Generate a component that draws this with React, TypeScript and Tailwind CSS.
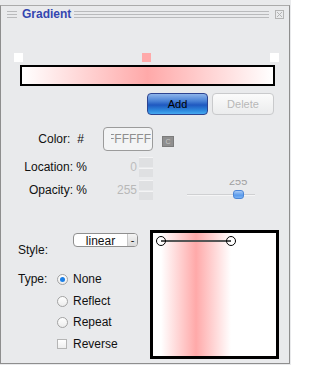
import React from "react";

function Lines({ className }: { className?: string }) {
  return (
    <div className={"flex flex-col gap-[2px] " + (className ?? "")}>
      <div className="h-px bg-[#b9babc]" />
      <div className="h-px bg-[#b9babc]" />
      <div className="h-px bg-[#b9babc]" />
    </div>
  );
}

function Spinner() {
  return (
    <div className="flex flex-col w-[14px] h-[20px] gap-px">
      <div className="flex-1 bg-[#dfe0e2] border-t border-[#f4f4f5]" />
      <div className="flex-1 bg-[#dfe0e2] border-t border-[#f4f4f5]" />
    </div>
  );
}

function Radio({ checked }: { checked?: boolean }) {
  return (
    <div className="w-[11px] h-[11px] rounded-full border border-[#a3a3a3] bg-[linear-gradient(to_bottom,#ffffff,#ececec)] flex items-center justify-center">
      {checked && <div className="w-[5px] h-[5px] rounded-full bg-[#1c7fe6]" />}
    </div>
  );
}

export default function App() {
  return (
    <div
      className="w-[291px] h-[365px] bg-[#e9eaec] overflow-hidden text-[#111]"
      style={{ fontFamily: '"Liberation Sans", Arial, sans-serif' }}
    >
      <div className="mt-[5px] w-[290px] h-[359px] border border-[#8e8e8e] border-t-[#ababab] bg-[#e9eaec] flex flex-col">
        {/* title bar */}
        <div className="h-[17px] flex items-center pr-[5px]">
          <Lines className="ml-[6px] w-[10px]" />
          <div className="ml-[5px] text-[12px] font-bold text-[#3446b0] leading-[17px]">Gradient</div>
          <Lines className="ml-[3px] flex-1" />
          <div className="ml-[6px] w-[9px] h-[9px] border border-[#b4b4b4] flex items-center justify-center">
            <svg width="7" height="7" viewBox="0 0 7 7">
              <path d="M1 1L6 6M6 1L1 6" stroke="#b4b4b4" strokeWidth="1" />
            </svg>
          </div>
        </div>

        {/* stops */}
        <div className="mt-[30px] ml-[13px] w-[265px] h-[9px] flex justify-between">
          <div className="w-[9px] h-[9px] bg-white" />
          <div className="w-[9px] h-[9px] bg-[#ffaaaa]" />
          <div className="w-[9px] h-[9px] bg-white" />
        </div>

        {/* bar */}
        <div className="mt-[3px] ml-[19px] w-[255px] h-[21px] border-2 border-black bg-[linear-gradient(to_right,#ffffff,#ffa9a9_50%,#ffffff)]" />

        {/* buttons */}
        <div className="mt-[7px] ml-[146px] flex gap-[4px]">
          <div className="w-[61px] h-[22px] rounded-[4px] border border-[#2c4390] bg-[linear-gradient(to_bottom,#8db4ea_0%,#4a82d6_35%,#1f58c0_55%,#2f8de0_85%,#47aaf0_100%)] flex items-center justify-center text-[11px] text-black">
            Add
          </div>
          <div className="w-[62px] h-[22px] rounded-[4px] border border-[#c9cacc] bg-[linear-gradient(to_bottom,#fbfbfb,#ebeced)] flex items-center justify-center text-[11px] text-[#b8b8b8]">
            Delete
          </div>
        </div>

        {/* color */}
        <div className="mt-[12px] h-[24px] flex items-center text-[12px]">
          <div className="w-[83px] flex justify-end gap-[7px]">
            <span>Color:</span>
            <span>#</span>
          </div>
          <div className="ml-[19px] w-[50px] h-[24px] rounded-[4px] border border-[#9b9b9b] bg-[#f3f4f5] flex items-center justify-end pr-[1px]">
            <div className="w-[40px] overflow-hidden flex justify-end whitespace-nowrap text-[12px] text-[#8e8e8e]">
              FFFFFF
            </div>
          </div>
          <div className="ml-[9px] mt-[5px] w-[12px] h-[11px] bg-[#8f8f8f] border border-[#7b7b7b] flex items-center justify-center text-[7px] leading-none text-[#c8c8c8]">
            C
          </div>
        </div>

        {/* location */}
        <div className="mt-[6px] h-[20px] flex items-center text-[12px]">
          <div className="w-[86px] text-right">Location: %</div>
          <div className="w-[50px] text-right text-[#bdbdbd]">0</div>
          <div className="ml-[2px]">
            <Spinner />
          </div>
        </div>

        {/* opacity */}
        <div className="mt-[3px] h-[20px] flex items-center text-[12px]">
          <div className="w-[86px] text-right">Opacity: %</div>
          <div className="w-[50px] text-right text-[#b8b8b8]">255</div>
          <div className="ml-[2px]">
            <Spinner />
          </div>
          <div className="ml-[34px] w-[68px] h-[20px] relative">
            <div className="absolute left-[42px] top-0 h-[7px] w-[22px] overflow-hidden">
              <div className="-mt-[4px] text-[11px] leading-[11px] text-[#a0a0a0]">255</div>
            </div>
            <div className="absolute left-0 right-0 top-[14px] h-px bg-[#cfd0d2]" />
            <div className="absolute left-0 right-0 top-[15px] h-px bg-[#f5f5f6]" />
            <div className="absolute left-[46px] top-[10px] w-[11px] h-[9px] rounded-[3px] border border-[#4d86d6] bg-[linear-gradient(to_bottom,#a9cbf6,#5b9bec_60%,#7ab3f5)]" />
          </div>
        </div>

        {/* bottom section */}
        <div className="mt-[30px] flex">
          <div className="w-[149px] flex flex-col text-[12px]">
            <div className="flex items-start h-[29px]">
              <div className="ml-[17px] mt-[13px] leading-[15px]">Style:</div>
              <div className="ml-[25px] mt-[3px] w-[65px] h-[14px] rounded-[4px] border border-[#8f8f8f] bg-white flex overflow-hidden">
                <div className="flex-1 text-center text-[12px] leading-[12px] pt-px">linear</div>
                <div className="w-[10px] border-l border-[#c8c8c8] bg-[linear-gradient(to_bottom,#f4f4f4,#d9d9d9)] flex items-center justify-center text-[11px] leading-none">
                  -
                </div>
              </div>
            </div>
            <div className="mt-[12px] h-[16px] flex items-center">
              <div className="ml-[17px] w-[39px]">Type:</div>
              <Radio checked />
              <div className="ml-[5px]">None</div>
            </div>
            <div className="mt-[6px] h-[16px] flex items-center">
              <div className="ml-[56px]">
                <Radio />
              </div>
              <div className="ml-[5px]">Reflect</div>
            </div>
            <div className="mt-[5px] h-[16px] flex items-center">
              <div className="ml-[56px]">
                <Radio />
              </div>
              <div className="ml-[5px]">Repeat</div>
            </div>
            <div className="mt-[6px] h-[16px] flex items-center">
              <div className="ml-[56px] w-[10px] h-[10px] border border-[#b5b5b5] bg-[linear-gradient(to_bottom,#ffffff,#eeeeee)]" />
              <div className="ml-[6px]">Reverse</div>
            </div>
          </div>
          <div className="w-[129px] h-[129px] border-[3px] border-black bg-white">
            <svg width="123" height="123" viewBox="0 0 123 123">
              <defs>
                <linearGradient id="g" x1="8" y1="0" x2="78" y2="0" gradientUnits="userSpaceOnUse">
                  <stop offset="0" stopColor="#ffffff" />
                  <stop offset="0.5" stopColor="#ffa9a9" />
                  <stop offset="1" stopColor="#ffffff" />
                </linearGradient>
              </defs>
              <rect x="8" y="0" width="70" height="123" fill="url(#g)" />
              <line x1="8" y1="8" x2="78" y2="8" stroke="#555" strokeWidth="2" />
              <circle cx="8" cy="8" r="4.5" fill="none" stroke="#000" strokeWidth="1" />
              <circle cx="78" cy="8" r="4.5" fill="none" stroke="#000" strokeWidth="1" />
            </svg>
          </div>
        </div>
      </div>
    </div>
  );
}
